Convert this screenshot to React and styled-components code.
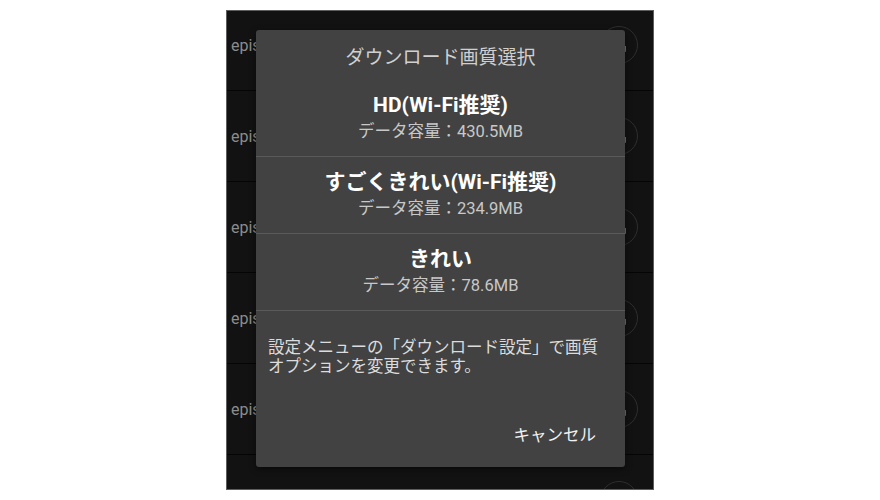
import React from 'react';
import styled, { createGlobalStyle } from 'styled-components';

const GlobalStyle = createGlobalStyle`
body {
  margin: 0;
  background: #fff;
  font-family: Roboto, "Noto Sans CJK JP", sans-serif;
}`

const Screen = styled.div`
position: relative;
box-sizing: border-box;
width: 428px;
height: 480px;
margin: 10px auto 0;
border: 1px solid #5e5e5e;
background: #121212;
overflow: hidden;`

const List = styled.div`
display: flex;
flex-direction: column;
margin-top: -11px;`

const Row = styled.div`
display: flex;
align-items: center;
justify-content: space-between;
height: 90px;
flex-shrink: 0;
padding: 0 15px 0 4px;
border-bottom: 1px solid #050505;`

const RowLabel = styled.span`
font-size: 16px;
color: #8c8c8c;`

const CircleBtn = styled.div`
display: flex;
align-items: center;
justify-content: center;
width: 36px;
height: 36px;
border: 1px solid #2e2e2e;
border-radius: 50%;`

const Dialog = styled.div`
position: absolute;
left: 29px;
top: 19px;
width: 369px;
height: 437px;
display: flex;
flex-direction: column;
background: #424242;
border-radius: 3px;
box-shadow: 0 2px 6px rgba(0, 0, 0, 0.5);`

const Title = styled.div`
height: 50px;
display: flex;
align-items: center;
justify-content: center;
font-size: 19px;
color: #d0d0d0;`

const Option = styled.div`
height: 76px;
display: flex;
flex-direction: column;
align-items: center;
justify-content: center;
border-bottom: 1px solid #5a5a5a;`

const OptionName = styled.div`
font-size: 21px;
line-height: 28px;
font-weight: bold;
color: #fff;`

const OptionSize = styled.div`
font-size: 16.5px;
line-height: 26px;
color: #c8c8c8;`

const Message = styled.div`
flex: 1;
padding: 27px 20px 0 12px;
font-size: 16.5px;
line-height: 19px;
color: #dcdcdc;`

const Actions = styled.div`
display: flex;
justify-content: flex-end;
padding: 0 29px 19px 0;`

const CancelButton = styled.button`
background: none;
border: none;
padding: 0;
font-family: inherit;
font-size: 16.5px;
line-height: 24px;
color: #f2f2f2;`

const options = [
  { name: 'HD(Wi-Fi推奨)', size: '430.5MB' },
  { name: 'すごくきれい(Wi-Fi推奨)', size: '234.9MB' },
  { name: 'きれい', size: '78.6MB' },
];

const rows = ['episode', 'episode', 'episode', 'episode', 'episode', ''];

const DownloadIcon = () => (
  <svg width="20" height="20" viewBox="0 0 20 20" fill="none" stroke="#8a8a8a" strokeWidth="1.6">
    <path d="M10 3v9M6 8l4 4 4-4M4 11v5h12v-5" />
  </svg>
);

const App = () => {
  return (
    <>
      <GlobalStyle />
      <Screen>
        <List>
          {rows.map((label, i) => (
            <Row key={i}>
              <RowLabel>{label}</RowLabel>
              <CircleBtn>
                <DownloadIcon />
              </CircleBtn>
            </Row>
          ))}
        </List>
        <Dialog>
          <Title>ダウンロード画質選択</Title>
          {options.map((o) => (
            <Option key={o.name}>
              <OptionName>{o.name}</OptionName>
              <OptionSize>データ容量：{o.size}</OptionSize>
            </Option>
          ))}
          <Message>
            設定メニューの「ダウンロード設定」で画質
            <br />
            オプションを変更できます。
          </Message>
          <Actions>
            <CancelButton>キャンセル</CancelButton>
          </Actions>
        </Dialog>
      </Screen>
    </>
  );
};

export default App;
